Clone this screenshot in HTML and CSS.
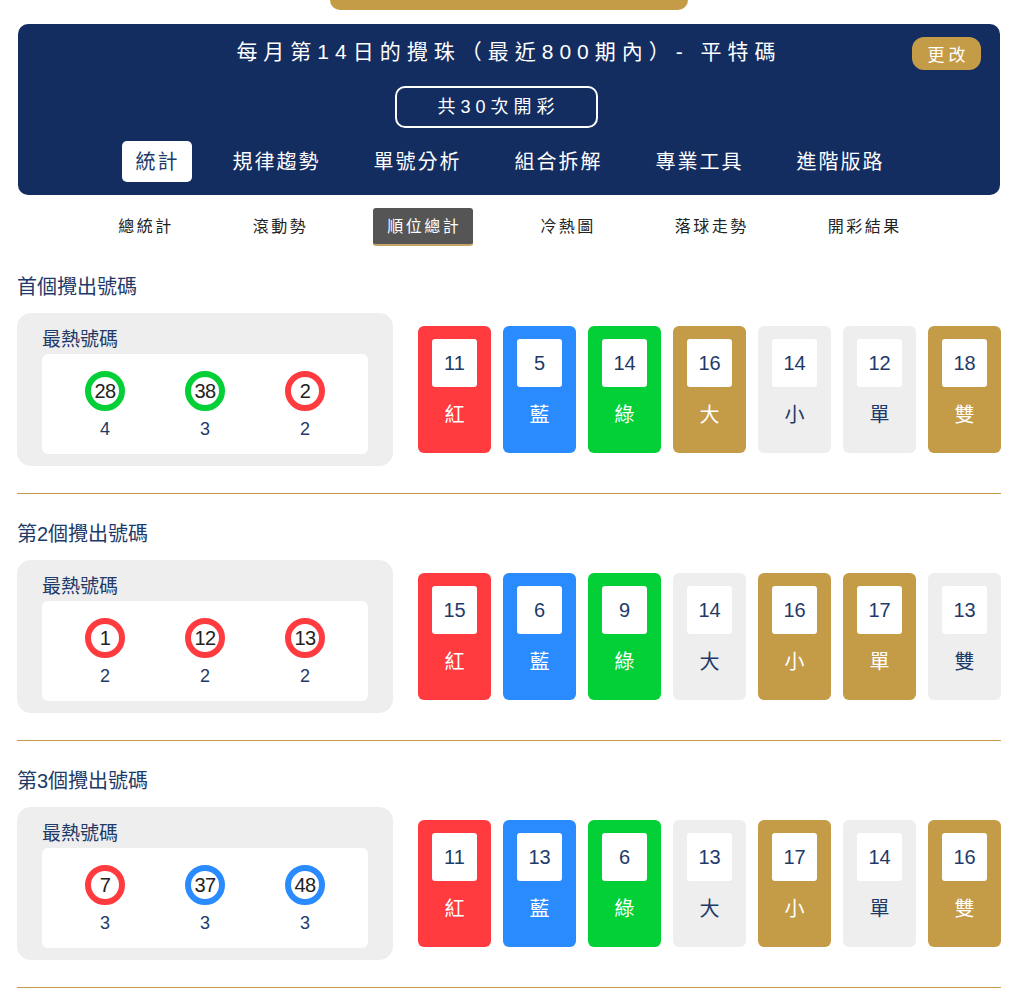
FILE: index.html
```html
<!DOCTYPE html>
<html lang="zh-Hant">
<head>
  <meta charset="UTF-8">
  <title>順位總計</title>
  <link rel="stylesheet" href="styles.css">
</head>
<body>
  <div class="page">
    <div class="top-pill"></div>

    <div class="panel">
      <h1 class="panel-title">每月第14日的攪珠（最近800期內）- 平特碼</h1>
      <button class="change-btn">更改</button>
      <div class="draw-count">共30次開彩</div>
      <nav class="main-tabs">
        <a class="active">統計</a>
        <a>規律趨勢</a>
        <a>單號分析</a>
        <a>組合拆解</a>
        <a>專業工具</a>
        <a>進階版路</a>
      </nav>
    </div>

    <nav class="sub-tabs">
      <a>總統計</a>
      <a>滾動勢</a>
      <a class="active">順位總計</a>
      <a>冷熱圖</a>
      <a>落球走勢</a>
      <a>開彩結果</a>
    </nav>

    <section class="rank">
      <h2>首個攪出號碼</h2>
      <div class="rank-row">
        <div class="hot-card">
          <div class="hot-label">最熱號碼</div>
          <div class="hot-balls">
            <div class="hot-item"><span class="ball green">28</span><span class="hits">4</span></div>
            <div class="hot-item"><span class="ball green">38</span><span class="hits">3</span></div>
            <div class="hot-item"><span class="ball red">2</span><span class="hits">2</span></div>
          </div>
        </div>
        <div class="tiles">
          <div class="tile red"><span class="num">11</span><span class="name">紅</span></div>
          <div class="tile blue"><span class="num">5</span><span class="name">藍</span></div>
          <div class="tile green"><span class="num">14</span><span class="name">綠</span></div>
          <div class="tile gold"><span class="num">16</span><span class="name">大</span></div>
          <div class="tile grey"><span class="num">14</span><span class="name">小</span></div>
          <div class="tile grey"><span class="num">12</span><span class="name">單</span></div>
          <div class="tile gold"><span class="num">18</span><span class="name">雙</span></div>
        </div>
      </div>
    </section>

    <section class="rank">
      <h2>第2個攪出號碼</h2>
      <div class="rank-row">
        <div class="hot-card">
          <div class="hot-label">最熱號碼</div>
          <div class="hot-balls">
            <div class="hot-item"><span class="ball red">1</span><span class="hits">2</span></div>
            <div class="hot-item"><span class="ball red">12</span><span class="hits">2</span></div>
            <div class="hot-item"><span class="ball red">13</span><span class="hits">2</span></div>
          </div>
        </div>
        <div class="tiles">
          <div class="tile red"><span class="num">15</span><span class="name">紅</span></div>
          <div class="tile blue"><span class="num">6</span><span class="name">藍</span></div>
          <div class="tile green"><span class="num">9</span><span class="name">綠</span></div>
          <div class="tile grey"><span class="num">14</span><span class="name">大</span></div>
          <div class="tile gold"><span class="num">16</span><span class="name">小</span></div>
          <div class="tile gold"><span class="num">17</span><span class="name">單</span></div>
          <div class="tile grey"><span class="num">13</span><span class="name">雙</span></div>
        </div>
      </div>
    </section>

    <section class="rank">
      <h2>第3個攪出號碼</h2>
      <div class="rank-row">
        <div class="hot-card">
          <div class="hot-label">最熱號碼</div>
          <div class="hot-balls">
            <div class="hot-item"><span class="ball red">7</span><span class="hits">3</span></div>
            <div class="hot-item"><span class="ball blue">37</span><span class="hits">3</span></div>
            <div class="hot-item"><span class="ball blue">48</span><span class="hits">3</span></div>
          </div>
        </div>
        <div class="tiles">
          <div class="tile red"><span class="num">11</span><span class="name">紅</span></div>
          <div class="tile blue"><span class="num">13</span><span class="name">藍</span></div>
          <div class="tile green"><span class="num">6</span><span class="name">綠</span></div>
          <div class="tile grey"><span class="num">13</span><span class="name">大</span></div>
          <div class="tile gold"><span class="num">17</span><span class="name">小</span></div>
          <div class="tile grey"><span class="num">14</span><span class="name">單</span></div>
          <div class="tile gold"><span class="num">16</span><span class="name">雙</span></div>
        </div>
      </div>
    </section>
  </div>
</body>
</html>
```

FILE: styles.css
```css
body {
  margin: 0;
  background: #fff;
  font-family: "Liberation Sans", "Noto Sans CJK TC", sans-serif;
  color: #1e3a68;
}

.page {
  width: 984px;
  margin-left: 17px;
}

.top-pill {
  width: 358px;
  height: 10px;
  margin: 0 auto;
  background: #c49b47;
  border-radius: 0 0 12px 12px;
}

/* navy header panel */
.panel {
  position: relative;
  margin: 14px 1px 0;
  padding: 14px 0 13px;
  background: #132d61;
  border-radius: 10px;
  color: #fff;
  text-align: center;
}

.panel-title {
  margin: 0;
  font-size: 21px;
  font-weight: normal;
  line-height: 28px;
  letter-spacing: 6px;
}

.change-btn {
  position: absolute;
  top: 13px;
  right: 19px;
  width: 69px;
  height: 33px;
  padding: 0 0 0 4px;
  border: none;
  border-radius: 12px;
  background: #c49b47;
  color: #fff;
  font-family: inherit;
  font-size: 17px;
  letter-spacing: 4px;
}

.draw-count {
  display: inline-block;
  margin: 20px 26px 0 0;
  width: 199px;
  height: 38px;
  line-height: 38px;
  border: 2px solid #fff;
  border-radius: 10px;
  font-size: 18px;
  letter-spacing: 5px;
  text-indent: 5px;
}

.main-tabs {
  display: flex;
  justify-content: center;
  gap: 27px;
  margin-top: 13px;
}

.main-tabs a {
  padding: 9px 12px 8px 14px;
  font-size: 20px;
  line-height: 24px;
  letter-spacing: 2px;
  border-radius: 5px;
  color: #fff;
}

.main-tabs a.active {
  background: #fff;
  color: #1e3a68;
}

/* secondary tabs */
.sub-tabs {
  display: flex;
  justify-content: center;
  gap: 53px;
  margin: 13px 0 1px;
}

.sub-tabs a {
  padding: 8px 12px 6px 14px;
  font-size: 16px;
  line-height: 22px;
  letter-spacing: 2.5px;
  color: #222;
  border-bottom: 2px solid transparent;
  border-radius: 3px;
}

.sub-tabs a.active {
  background: #555;
  color: #fff;
  border-bottom-color: #c4a566;
}

/* rank sections */
.rank {
  padding: 27px 0 27px;
  border-bottom: 1px solid #c49b47;
}

.rank h2 {
  margin: 0 0 13px;
  font-size: 20px;
  font-weight: normal;
  line-height: 26px;
  color: #1e3a68;
}

.rank-row {
  display: flex;
  align-items: center;
  gap: 25px;
}

.hot-card {
  width: 326px;
  padding: 16px 25px 12px;
  background: #eee;
  border-radius: 14px;
}

.hot-label {
  font-size: 19px;
  line-height: 22px;
  margin-bottom: 3px;
}

.hot-balls {
  display: flex;
  padding: 17px 13px 15px;
  background: #fff;
  border-radius: 6px;
}

.hot-item {
  flex: 1;
  display: flex;
  flex-direction: column;
  align-items: center;
}

.ball {
  width: 28px;
  height: 28px;
  border: 6px solid;
  border-radius: 50%;
  background: #fff;
  color: #222;
  font-size: 20px;
  line-height: 28px;
  text-align: center;
  letter-spacing: -0.5px;
}

.ball.red { border-color: #ff3b3f; }
.ball.green { border-color: #03cf37; }
.ball.blue { border-color: #2a8bff; }

.hits {
  margin-top: 8px;
  font-size: 18px;
  line-height: 20px;
}

.tiles {
  flex: 1;
  display: flex;
  gap: 12px;
}

.tile {
  flex: 1;
  height: 127px;
  padding-top: 13px;
  box-sizing: border-box;
  display: flex;
  flex-direction: column;
  border-radius: 6px;
  color: #fff;
}

.tile .num {
  margin: 0 14px;
  height: 48px;
  line-height: 48px;
  background: #fff;
  border-radius: 3px;
  text-align: center;
  font-size: 20px;
  color: #1e3a68;
}

.tile .name {
  margin-top: 15px;
  font-size: 20px;
  line-height: 26px;
  text-align: center;
}

.tile.red { background: #ff3b3f; }
.tile.blue { background: #2a8bff; }
.tile.green { background: #03cf37; }
.tile.gold { background: #c49b47; }
.tile.grey { background: #eee; color: #1e3a68; }
```
